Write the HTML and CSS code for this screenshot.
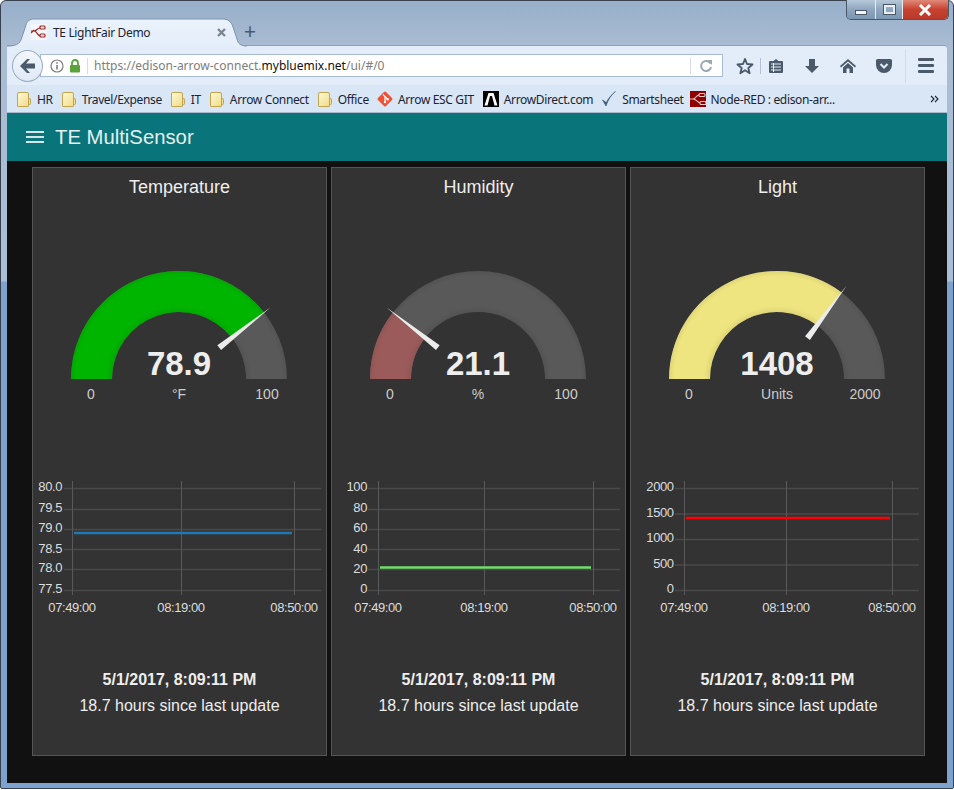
FILE: index.html
```html
<!DOCTYPE html>
<html lang="en">
<head>
    <meta charset="UTF-8">
    <title>TE LightFair Demo</title>
    <link rel="stylesheet" href="styles.css">
</head>
<body>

<div class="window">

    <!-- tab strip -->
    <div class="tabstrip">
        <svg class="tab-shape" width="260" height="46" viewBox="0 0 260 46">
            <defs>
                <linearGradient id="tabfill" x1="0" y1="0" x2="0" y2="1">
                    <stop offset="0" stop-color="#eaf2fb"/>
                    <stop offset="1" stop-color="#e4eefa"/>
                </linearGradient>
            </defs>
            <path d="M0 46 L0 45 C8 45 13 44 15 36 L19 24 C20 20 23 18 27 18 L215 18 C221 18 224 20 226 26 L230 38 C231 43 234 45 240 45 L240 46 Z" fill="url(#tabfill)"/>
            <path d="M0 45 C8 45 13 44 15 36 L19 24 C20 20 23 18 27 18 L215 18 C221 18 224 20 226 26 L230 38 C231 43 234 45 240 45" fill="none" stroke="#7f94aa"/>
        </svg>
        <div class="tab">
            <svg class="fav" width="16" height="16" viewBox="0 0 16 16">
                <rect width="16" height="16" fill="#f4f6fa"/>
                <g fill="none" stroke="#a02020" stroke-width="1.2">
                    <path d="M0 7 H3 C6 7 6 4 9 4 M3 7 C6 7 6 11 9 12 M0 9 L3 6"/>
                    <rect x="9" y="2" width="5" height="3" rx="1"/>
                    <rect x="9" y="10" width="5" height="3" rx="1"/>
                </g>
            </svg>
            <span class="tab-title">TE LightFair Demo</span>
            <svg class="tab-close" width="9" height="9" viewBox="0 0 9 9"><path d="M1 1 L8 8 M8 1 L1 8" stroke="#7b8794" stroke-width="2.4"/></svg>
        </div>
        <div class="newtab">+</div>
        <div class="winctl">
            <div class="winbtn btn-min"><span></span></div>
            <div class="winbtn btn-max"><span></span></div>
            <div class="winbtn btn-close">
                <svg width="14" height="12" viewBox="0 0 14 12"><path d="M2 1 L12 11 M12 1 L2 11" stroke="#fff" stroke-width="3"/></svg>
            </div>
        </div>
    </div>

    <!-- nav bar -->
    <div class="navbar">
        <div class="backbtn">
            <svg width="18" height="16" viewBox="0 0 18 16"><path d="M1 8 L8 1 H11 L7 5.5 H16 V10.5 H7 L11 15 H8 Z" fill="#4b5a6b"/></svg>
        </div>
        <div class="urlbar">
            <svg class="url-info" width="14" height="14" viewBox="0 0 14 14">
                <circle cx="7" cy="7" r="6" fill="none" stroke="#7d7d7d" stroke-width="1.2"/>
                <path d="M7 6 V10.5 M7 3.2 V4.8" stroke="#7d7d7d" stroke-width="1.6"/>
            </svg>
            <svg class="url-lock" width="12" height="14" viewBox="0 0 12 14">
                <path d="M3 6 V4 A3 3 0 0 1 9 4 V6" fill="none" stroke="#5aa33a" stroke-width="1.8"/>
                <rect x="1" y="6" width="10" height="7.5" rx="1" fill="#5aa33a"/>
            </svg>
            <span class="url-sep"></span>
            <span class="url-text">https://edison-arrow-connect.<b>mybluemix.net</b>/ui/#/0</span>
            <span class="url-sep url-sep-right"></span>
            <svg class="url-reload" width="14" height="14" viewBox="0 0 14 14">
                <path d="M11.5 4.5 A5 5 0 1 0 12 8" fill="none" stroke="#9aa7b4" stroke-width="2"/>
                <path d="M8.5 1 H13 V6 Z" fill="#9aa7b4"/>
            </svg>
        </div>
        <svg class="tool tool-star" width="18" height="18" viewBox="0 0 18 18">
            <path d="M9 2 L11 7 L16.5 7.4 L12.3 10.9 L13.6 16.2 L9 13.3 L4.4 16.2 L5.7 10.9 L1.5 7.4 L7 7 Z" fill="none" stroke="#4b5a6b" stroke-width="1.9" stroke-linejoin="round"/>
        </svg>
        <span class="tool-sep"></span>
        <svg class="tool tool-list" width="16" height="16" viewBox="0 0 16 16">
            <path d="M2 3 H5.5 L8 1 L10.5 3 H14 Q15 3 15 4 V14 Q15 15 14 15 H2 Q1 15 1 14 V4 Q1 3 2 3 Z" fill="#4b5a6b"/>
            <path d="M3 6 H13 M3 9 H13 M3 12 H13" stroke="#e2ecf8"/>
            <path d="M5.5 5 V14" stroke="#e2ecf8"/>
        </svg>
        <svg class="tool tool-down" width="16" height="16" viewBox="0 0 16 16">
            <path d="M5 1 H11 V8 H15 L8 15 L1 8 H5 Z" fill="#4b5a6b"/>
        </svg>
        <svg class="tool tool-home" width="16" height="16" viewBox="0 0 16 16">
            <path d="M8 1 L16 8 L15 9.5 L8 3.5 L1 9.5 L0 8 Z" fill="#4b5a6b"/>
            <path d="M3 9.5 L8 5 L13 9.5 V15 H9.5 V10.5 H6.5 V15 H3 Z" fill="#4b5a6b"/>
        </svg>
        <svg class="tool tool-pocket" width="16" height="14" viewBox="0 0 16 14">
            <path d="M1.5 0 H14.5 Q16 0 16 1.5 V6 A8 8 0 0 1 0 6 V1.5 Q0 0 1.5 0 Z" fill="#4b5a6b"/>
            <path d="M4.5 5 L8 8.5 L11.5 5" fill="none" stroke="#e2ecf8" stroke-width="2"/>
        </svg>
        <span class="tool-sep tool-sep-tall"></span>
        <div class="tool-menu"><span></span><span></span><span></span></div>
    </div>

    <!-- bookmarks -->
    <div class="bookmarks">
        <div class="bm bm-folder"><span class="folder"></span>HR</div>
        <div class="bm bm-folder"><span class="folder"></span>Travel/Expense</div>
        <div class="bm bm-folder"><span class="folder"></span>IT</div>
        <div class="bm bm-folder"><span class="folder"></span>Arrow Connect</div>
        <div class="bm bm-folder"><span class="folder"></span>Office</div>
        <div class="bm bm-git">
            <svg width="16" height="16" viewBox="0 0 16 16">
                <rect x="2.3" y="2.3" width="11.4" height="11.4" rx="1.5" transform="rotate(45 8 8)" fill="#f05033"/>
                <path d="M6 3.5 L11 8.5 M8 5.8 V11" stroke="#fff" stroke-width="1.2"/>
                <circle cx="8" cy="11" r="1.2" fill="#fff"/>
                <circle cx="10.7" cy="8.3" r="1.2" fill="#fff"/>
            </svg>
            Arrow ESC GIT
        </div>
        <div class="bm">
            <svg width="16" height="16" viewBox="0 0 16 16">
                <rect width="16" height="16" fill="#000"/>
                <path d="M1.5 14.5 L5.5 2 H10.5 L14.5 14.5 H11.5 L9 5 H7 L4.5 14.5 Z" fill="#fff"/>
            </svg>
            ArrowDirect.com
        </div>
        <div class="bm bm-check">
            <svg width="14" height="16" viewBox="0 0 14 16">
                <path d="M0.5 9 L4 15 C6 9 9 4 13.5 0.5 C9 4 6 8 4.3 11.5 Z" fill="#3f5a78" stroke="#3f5a78" stroke-width="0.6"/>
            </svg>
            Smartsheet
        </div>
        <div class="bm bm-node">
            <svg width="16" height="16" viewBox="0 0 16 16">
                <rect width="16" height="16" fill="#8f0000"/>
                <g fill="none" stroke="#e8c8c8" stroke-width="1.1">
                    <path d="M0 8 H3 C6 8 6 4 9 4 M3 8 C6 8 7 11 10 12"/>
                    <rect x="9" y="2.5" width="6" height="3" rx="1"/>
                    <rect x="10" y="10.5" width="6" height="3" rx="1"/>
                </g>
            </svg>
            Node-RED : edison-arr...
        </div>
        <svg class="bm-more" width="9" height="8" viewBox="0 0 9 8"><path d="M1 1 L4 4 L1 7 M5 1 L8 4 L5 7" fill="none" stroke="#1a2433" stroke-width="1.1"/></svg>
    </div>

    <!-- dashboard -->
    <div class="app">
        <div class="app-header">
            <div class="burger"><span></span><span></span><span></span></div>
            <h1>TE MultiSensor</h1>
        </div>
        <div class="cards">

            <div class="card">
                <h2>Temperature</h2>
                <svg class="gauge" width="293" height="210" viewBox="0 0 293 210">
                    <defs>
                        <radialGradient id="arcshade" gradientUnits="userSpaceOnUse" cx="146" cy="174" r="108">
                            <stop offset="0.62" stop-color="#000" stop-opacity="0.07"/>
                            <stop offset="0.68" stop-color="#000" stop-opacity="0"/>
                            <stop offset="0.95" stop-color="#000" stop-opacity="0"/>
                            <stop offset="1" stop-color="#000" stop-opacity="0.07"/>
                        </radialGradient>
                    </defs>
                    <path class="arc-bg" d="M38 174 A108 108 0 0 1 254 174 L213 174 A67 67 0 0 0 79 174 Z"/>
                    <path fill="#00b500" d="M38 174 A108 108 0 0 1 231.1 107.5 L198.8 132.8 A67 67 0 0 0 79 174 Z"/>
                    <path class="arc-shade" d="M38 174 A108 108 0 0 1 254 174 L213 174 A67 67 0 0 0 79 174 Z"/>
                    <polygon class="needle" points="237.4,102.6 188.05,144.96 184.35,140.24"/>
                    <text class="g-value" x="146" y="170">78.9</text>
                    <text class="g-label" x="58" y="194">0</text>
                    <text class="g-label" x="146" y="194">°F</text>
                    <text class="g-label" x="234" y="194">100</text>
                </svg>
                <svg class="chart" width="293" height="150" viewBox="0 0 293 150">
                    <path class="grid-h" d="M31 18.5 H288 M31 39.5 H288 M31 59.5 H288 M31 79.5 H288 M31 99.5 H288 M31 120.5 H288"/>
                    <path class="grid-v" d="M39.5 11 V125 M148.5 11 V125 M261.5 11 V125"/>
                    <path class="series" stroke="#1f77b4" d="M41 63 H259"/>
                    <text class="y-tick" x="29" y="21">80.0</text>
                    <text class="y-tick" x="29" y="42">79.5</text>
                    <text class="y-tick" x="29" y="62">79.0</text>
                    <text class="y-tick" x="29" y="83">78.5</text>
                    <text class="y-tick" x="29" y="102">78.0</text>
                    <text class="y-tick" x="29" y="123">77.5</text>
                    <text class="x-tick" x="39" y="142">07:49:00</text>
                    <text class="x-tick" x="148" y="142">08:19:00</text>
                    <text class="x-tick" x="261" y="142">08:50:00</text>
                </svg>
                <p class="stamp">5/1/2017, 8:09:11 PM</p>
                <p class="since">18.7 hours since last update</p>
            </div>

            <div class="card">
                <h2>Humidity</h2>
                <svg class="gauge" width="293" height="210" viewBox="0 0 293 210">
                    <path class="arc-bg" d="M38 174 A108 108 0 0 1 254 174 L213 174 A67 67 0 0 0 79 174 Z"/>
                    <path fill="#9c5b5b" d="M38 174 A108 108 0 0 1 60.9 107.5 L93.2 132.8 A67 67 0 0 0 79 174 Z"/>
                    <path class="arc-shade" d="M38 174 A108 108 0 0 1 254 174 L213 174 A67 67 0 0 0 79 174 Z"/>
                    <polygon class="needle" points="54.6,102.6 103.95,144.96 107.65,140.24"/>
                    <text class="g-value" x="146" y="170">21.1</text>
                    <text class="g-label" x="58" y="194">0</text>
                    <text class="g-label" x="146" y="194">%</text>
                    <text class="g-label" x="234" y="194">100</text>
                </svg>
                <svg class="chart" width="293" height="150" viewBox="0 0 293 150">
                    <path class="grid-h" d="M36 18.5 H288 M36 39.5 H288 M36 59.5 H288 M36 79.5 H288 M36 99.5 H288 M36 120.5 H288"/>
                    <path class="grid-v" d="M46.5 11 V125 M152.5 11 V125 M261.5 11 V125"/>
                    <path class="series" stroke="#6fe06a" d="M48 97.5 H259"/>
                    <text class="y-tick" x="35" y="21">100</text>
                    <text class="y-tick" x="35" y="42">80</text>
                    <text class="y-tick" x="35" y="62">60</text>
                    <text class="y-tick" x="35" y="83">40</text>
                    <text class="y-tick" x="35" y="103">20</text>
                    <text class="y-tick" x="35" y="123">0</text>
                    <text class="x-tick" x="46" y="142">07:49:00</text>
                    <text class="x-tick" x="152" y="142">08:19:00</text>
                    <text class="x-tick" x="261" y="142">08:50:00</text>
                </svg>
                <p class="stamp">5/1/2017, 8:09:11 PM</p>
                <p class="since">18.7 hours since last update</p>
            </div>

            <div class="card">
                <h2>Light</h2>
                <svg class="gauge" width="293" height="210" viewBox="0 0 293 210">
                    <path class="arc-bg" d="M38 174 A108 108 0 0 1 254 174 L213 174 A67 67 0 0 0 79 174 Z"/>
                    <path fill="#efe580" d="M38 174 A108 108 0 0 1 210.6 87.4 L186.06 120.3 A67 67 0 0 0 79 174 Z"/>
                    <path class="arc-shade" d="M38 174 A108 108 0 0 1 254 174 L213 174 A67 67 0 0 0 79 174 Z"/>
                    <polygon class="needle" points="215.4,81 178.9,134.9 174.1,131.3"/>
                    <text class="g-value" x="146" y="170">1408</text>
                    <text class="g-label" x="58" y="194">0</text>
                    <text class="g-label" x="146" y="194">Units</text>
                    <text class="g-label" x="234" y="194">2000</text>
                </svg>
                <svg class="chart" width="293" height="150" viewBox="0 0 293 150">
                    <path class="grid-h" d="M44 18.5 H288 M44 44 H288 M44 69.5 H288 M44 95 H288 M44 120.5 H288"/>
                    <path class="grid-v" d="M53.5 11 V125 M155.5 11 V125 M261.5 11 V125"/>
                    <path class="series" stroke="#f00" d="M55 48 H259"/>
                    <text class="y-tick" x="42.7" y="21">2000</text>
                    <text class="y-tick" x="42.7" y="47">1500</text>
                    <text class="y-tick" x="42.7" y="72">1000</text>
                    <text class="y-tick" x="42.7" y="98">500</text>
                    <text class="y-tick" x="42.7" y="123">0</text>
                    <text class="x-tick" x="53" y="142">07:49:00</text>
                    <text class="x-tick" x="155" y="142">08:19:00</text>
                    <text class="x-tick" x="261" y="142">08:50:00</text>
                </svg>
                <p class="stamp">5/1/2017, 8:09:11 PM</p>
                <p class="since">18.7 hours since last update</p>
            </div>

        </div>
    </div>
</div>

</body>
</html>
```
FILE: styles.css
```css
html, body {
    margin: 0;
    height: 100%;
    background: #fff;
    overflow: hidden;
}
.window {
    box-sizing: border-box;
    width: 954px;
    height: 789px;
    display: flex;
    flex-direction: column;
    padding: 0 6px 5px;
    border: 1px solid #38424e;
    border-radius: 6px 6px 2px 2px;
    background: linear-gradient(to bottom, #97afca 0, #a9bcd2 46px, #a9bfd8 280px, #7da2cd 281px, #7da2cd 100%);
    font-family: "Noto Sans", sans-serif;
    font-size: 12px;
    color: #1a2433;
}

/* tab strip */
.tabstrip {
    position: relative;
    height: 44px;
    display: flex;
    align-items: flex-end;
    flex: none;
}
.tab-shape {
    position: absolute;
    left: 0;
    top: 0;
}
.tab {
    position: relative;
    width: 215px;
    height: 27px;
    margin-left: 17px;
    display: flex;
    align-items: center;
    padding: 1px 0 0 7px;
    box-sizing: border-box;
}
.fav {
    flex: none;
}
.tab-title {
    margin-left: 6px;
    white-space: nowrap;
    flex: 1;
    letter-spacing: -0.35px;
}
.tab-close {
    flex: none;
    margin-right: 13px;
}
.newtab {
    position: relative;
    width: 20px;
    height: 27px;
    margin-left: 1px;
    font-size: 21px;
    line-height: 27px;
    text-align: center;
    color: #4b5a6b;
}
.winctl {
    position: absolute;
    right: -2px;
    top: -1px;
    height: 19px;
    display: flex;
    border: 1px solid #4a5866;
    border-top: none;
    border-radius: 0 0 5px 5px;
    overflow: hidden;
}
.winbtn {
    display: flex;
    align-items: center;
    justify-content: center;
    height: 19px;
    background: linear-gradient(to bottom, #b6c8da, #8fa6bf 50%, #7b95b1);
    border-left: 1px solid #e4ebf3;
}
.btn-min {
    width: 28px;
    border-left: none;
}
.btn-min span {
    display: block;
    width: 10px;
    height: 3px;
    margin-top: 5px;
    background: #f2f5f9;
    border: 1px solid #4a5866;
}
.btn-max {
    width: 26px;
}
.btn-max span {
    display: block;
    width: 7px;
    height: 5px;
    border: 2px solid #e8eef5;
    outline: 1px solid #4a5866;
}
.btn-close {
    width: 45px;
    background: linear-gradient(to bottom, #e0897a, #c8412f 50%, #b83a2b);
}
.btn-close svg {
    margin-right: 2px;
}

/* nav bar */
.navbar {
    height: 40px;
    flex: none;
    display: flex;
    align-items: center;
    padding-left: 5px;
    background: #e3edf9;
    border-top: 1px solid #8ba1b9;
    box-sizing: border-box;
    border-top-right-radius: 3px;
}
.backbtn {
    position: relative;
    box-sizing: border-box;
    width: 31px;
    height: 32px;
    flex: none;
    margin-right: -3px;
    border-radius: 50%;
    border: 1px solid #98abc0;
    background: linear-gradient(to bottom, #f3f7fc, #dfe9f5);
    display: flex;
    align-items: center;
    justify-content: center;
}
.urlbar {
    box-sizing: border-box;
    width: 683px;
    height: 23px;
    flex: none;
    display: flex;
    align-items: center;
    background: #fff;
    border: 1px solid #a9bccf;
    color: #7d7d7d;
    padding-left: 9px;
}
.url-info {
    flex: none;
}
.url-lock {
    flex: none;
    margin-left: 5px;
}
.url-sep {
    width: 1px;
    height: 16px;
    flex: none;
    margin: 0 6px 0 6px;
    background: #d6dde5;
}
.url-text {
    flex: 1;
    white-space: nowrap;
}
.url-text b {
    font-weight: normal;
    color: #111;
}
.url-sep-right {
    margin: 0 8px 0 0;
}
.url-reload {
    flex: none;
    margin-right: 9px;
}
.tool {
    flex: none;
}
.tool-star {
    margin-left: 13px;
}
.tool-sep {
    width: 1px;
    height: 16px;
    flex: none;
    margin: 0 7px 0 6px;
    background: #b3c2d2;
}
.tool-sep-tall {
    height: 34px;
    margin: 0 12px 0 13px;
    background: #cfdbe8;
}
.tool-list {
    margin-right: 20px;
}
.tool-down {
    margin-right: 20px;
}
.tool-home {
    margin-right: 20px;
}
.tool-menu {
    display: flex;
    flex-direction: column;
    gap: 3px;
}
.tool-menu span {
    display: block;
    width: 16px;
    height: 3px;
    border-radius: 1px;
    background: #4b5a6b;
}

/* bookmarks */
.bookmarks {
    height: 28px;
    flex: none;
    display: flex;
    align-items: center;
    gap: 9px;
    padding: 1px 0 0 10px;
    background: #d8e6f6;
    border-bottom: 1px solid #a9bccf;
    box-sizing: border-box;
    white-space: nowrap;
    letter-spacing: -0.35px;
}
.bm {
    display: flex;
    align-items: center;
    gap: 5px;
}
.bm-folder {
    gap: 6px;
}
.bm-git {
    margin-left: -1px;
}
.bm-check {
    gap: 6px;
}
.bm-node {
    margin-left: -3px;
}
.folder {
    display: block;
    position: relative;
    box-sizing: border-box;
    width: 12px;
    height: 15px;
    margin-right: 2px;
    border: 1px solid #c2a550;
    border-radius: 2px 2px 1px 1px;
    background: linear-gradient(135deg, #fdf8d0, #f1dc8a);
}
.folder::after {
    content: "";
    position: absolute;
    right: -3px;
    top: 5px;
    width: 2px;
    height: 7px;
    box-sizing: border-box;
    border: 1px solid #c2a550;
    border-left: none;
    border-radius: 0 2px 2px 0;
    background: #f1dc8a;
}
.bm-more {
    margin-left: auto;
    margin-right: 8px;
}

/* dashboard */
.app {
    flex: 1;
    display: flex;
    flex-direction: column;
    background: #111;
    font-family: "Liberation Sans", Arial, sans-serif;
    color: #eee;
}
.app-header {
    height: 48px;
    flex: none;
    display: flex;
    align-items: center;
    background: #097479;
}
.burger {
    display: flex;
    flex-direction: column;
    gap: 3px;
    margin-left: 19px;
}
.burger span {
    display: block;
    width: 18px;
    height: 2px;
    background: #d5e6e6;
}
h1 {
    margin: 0 0 0 11px;
    font-size: 20.3px;
    font-weight: normal;
    color: #e4f0f0;
}
.cards {
    display: flex;
    gap: 4px;
    padding: 6px 0 0 25px;
}
.card {
    box-sizing: border-box;
    width: 295px;
    height: 589px;
    background: #333;
    border: 1px solid #555;
    text-align: center;
}
h2 {
    margin: 0;
    padding-top: 9px;
    font-size: 18px;
    line-height: 20px;
    font-weight: normal;
    color: #eee;
}
svg {
    display: block;
}
.gauge {
    margin-top: 8px;
}
.chart {
    margin-top: 55px;
}
.arc-bg {
    fill: #595959;
}
.arc-shade {
    fill: url(#arcshade);
}
.needle {
    fill: #ececec;
}
.g-value {
    font-size: 33px;
    font-weight: bold;
    fill: #eee;
    text-anchor: middle;
}
.g-label {
    font-size: 14px;
    fill: #ccc;
    text-anchor: middle;
}
.grid-h {
    fill: none;
    stroke: #4a4a4a;
    stroke-width: 1.5;
}
.grid-v {
    fill: none;
    stroke: #595959;
    stroke-width: 1;
}
.series {
    fill: none;
    stroke-width: 2.5;
}
.y-tick {
    font-size: 13px;
    letter-spacing: -0.4px;
    fill: #ddd;
    text-anchor: end;
}
.x-tick {
    font-size: 13px;
    letter-spacing: -0.4px;
    fill: #ddd;
    text-anchor: middle;
}
.stamp {
    margin: 51px 0 0;
    font-size: 16px;
    line-height: 18px;
    font-weight: bold;
}
.since {
    margin: 8px 0 0;
    font-size: 16px;
    line-height: 18px;
}
```
